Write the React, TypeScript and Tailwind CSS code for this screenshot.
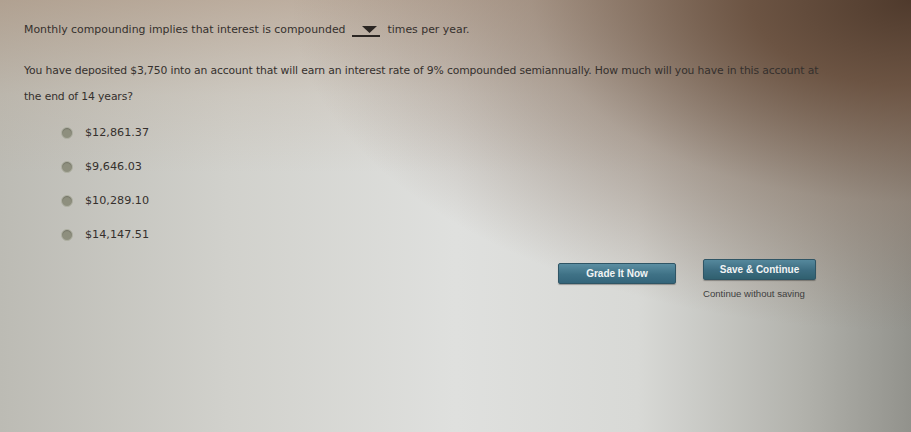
const answers = ['$12,861.37', '$9,646.03', '$10,289.10', '$14,147.51'];

function Radio() {
  return (
    <span className="inline-block w-[12px] h-[12px] rounded-full bg-[#8e8f7e] border border-[#b0b1a4] shadow-[inset_0_1px_1px_rgba(0,0,0,0.2)]" />
  );
}

export default function App() {
  return (
    <div className="relative w-[911px] h-[432px] overflow-hidden font-['DejaVu_Sans',Verdana,sans-serif] text-[#35302d] bg-[radial-gradient(ellipse_80%_90%_at_100%_0%,#4f3a2c_0%,#6c5443_22%,rgba(140,120,105,0.55)_52%,transparent_85%),linear-gradient(180deg,rgba(165,135,110,0.5)_0%,rgba(185,165,145,0.22)_22%,transparent_40%),linear-gradient(90deg,#bcbbb4_0%,#d1d1cc_25%,#dfe0de_50%,#d8d9d6_70%,#b2b2ac_88%,#92928c_100%)]">
      <div className="pl-[24px] pt-[22px]">
        <div className="flex items-center text-[10.9px] h-[16px]">
          <span>Monthly compounding implies that interest is compounded</span>
          <span className="relative ml-[6px] w-[28px] h-[14px] border-b-2 border-[#2b2623]">
            <svg className="absolute left-[10px] top-[3px]" width="15" height="7" viewBox="0 0 15 7">
              <polygon points="0,0 15,0 7.5,7" fill="#2b2623" />
            </svg>
          </span>
          <span className="ml-[8px]">times per year.</span>
        </div>

        <p className="mt-[20px] text-[10.8px] leading-[26px] tracking-[-0.13px] w-[810px]">
          You have deposited $3,750 into an account that will earn an interest rate of 9% compounded semiannually. How much will you have in this account at the end of 14 years?
        </p>

        <div className="mt-[15px] ml-[37px] flex flex-col gap-[18px]">
          {answers.map((a) => (
            <label key={a} className="flex items-center gap-[12px] h-[16px] text-[11.2px]">
              <Radio />
              <span>{a}</span>
            </label>
          ))}
        </div>
      </div>

      <div className="absolute left-[558px] top-[263px] flex">
        <button className="w-[118px] h-[21px] rounded-[2px] border border-[#2f5565] bg-[linear-gradient(180deg,#5b8ea2_0%,#3f7286_55%,#34657a_100%)] text-[#f2f4f4] text-[10px] font-bold font-['Liberation_Sans',Arial,sans-serif] shadow-[0_1px_1px_rgba(0,0,0,0.3)]">
          Grade It Now
        </button>
      </div>
      <div className="absolute left-[703px] top-[259px] flex flex-col">
        <button className="w-[113px] h-[21px] rounded-[2px] border border-[#2f5565] bg-[linear-gradient(180deg,#55889c_0%,#3c6c80_55%,#30606f_100%)] text-[#f2f4f4] text-[10px] font-bold font-['Liberation_Sans',Arial,sans-serif] shadow-[0_1px_1px_rgba(0,0,0,0.3)]">
          Save &amp; Continue
        </button>
        <span className="mt-[7px] text-[9.6px] text-[#3e3e3e] font-['Liberation_Sans',Arial,sans-serif]">Continue without saving</span>
      </div>
    </div>
  );
}
